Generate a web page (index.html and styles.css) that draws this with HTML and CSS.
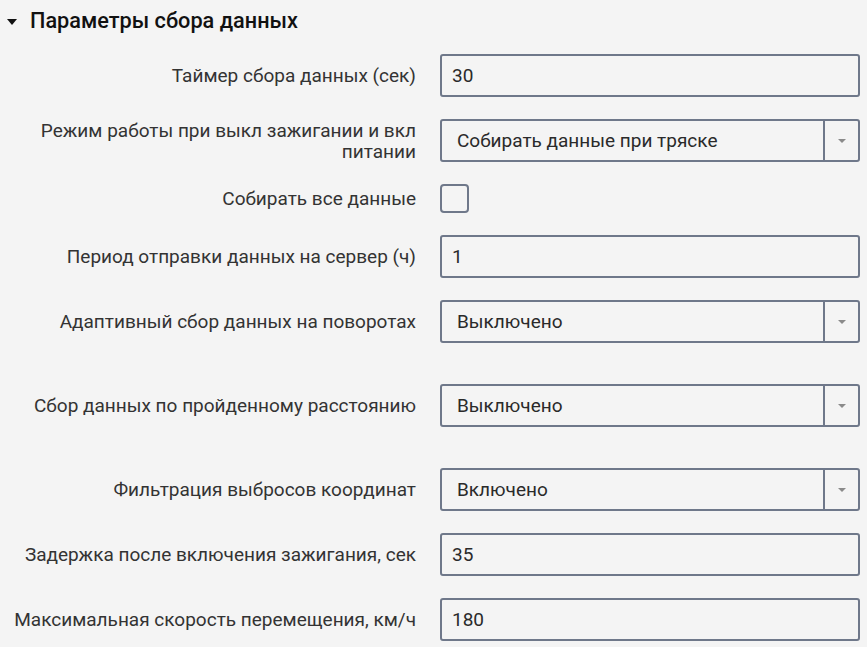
FILE: index.html
```html
<!DOCTYPE html>
<html lang="ru">
<head>
<meta charset="utf-8">
<title>Параметры сбора данных</title>
<link rel="stylesheet" href="styles.css">
</head>
<body>
<section class="panel">
  <h2 class="panel-title"><span class="caret"></span>Параметры сбора данных</h2>
  <div class="form">
    <div class="row">
      <label class="label">Таймер сбора данных (сек)</label>
      <div class="field input">30</div>
    </div>
    <div class="row">
      <label class="label">Режим работы при выкл зажигании и вкл питании</label>
      <div class="field select"><span class="select-value">Собирать данные при тряске</span><span class="select-btn"><span class="arrow"></span></span></div>
    </div>
    <div class="row row-check">
      <label class="label">Собирать все данные</label>
      <div class="field-check"><span class="checkbox"></span></div>
    </div>
    <div class="row">
      <label class="label">Период отправки данных на сервер (ч)</label>
      <div class="field input">1</div>
    </div>
    <div class="row row-spaced">
      <label class="label">Адаптивный сбор данных на поворотах</label>
      <div class="field select"><span class="select-value">Выключено</span><span class="select-btn"><span class="arrow"></span></span></div>
    </div>
    <div class="row row-spaced">
      <label class="label">Сбор данных по пройденному расстоянию</label>
      <div class="field select"><span class="select-value">Выключено</span><span class="select-btn"><span class="arrow"></span></span></div>
    </div>
    <div class="row">
      <label class="label">Фильтрация выбросов координат</label>
      <div class="field select"><span class="select-value">Включено</span><span class="select-btn"><span class="arrow"></span></span></div>
    </div>
    <div class="row">
      <label class="label">Задержка после включения зажигания, сек</label>
      <div class="field input">35</div>
    </div>
    <div class="row">
      <label class="label">Максимальная скорость перемещения, км/ч</label>
      <div class="field input">180</div>
    </div>
  </div>
</section>
</body>
</html>
```

FILE: styles.css
```css
html, body {
  margin: 0;
  padding: 0;
  background: #f4f4f4;
}
body {
  font-family: Roboto, "Noto Sans", sans-serif;
  color: #2a2a2a;
}
.panel {
  padding: 8px 7px 0 0;
}
.panel-title {
  display: flex;
  align-items: center;
  margin: 0;
  font-size: 21.7px;
  font-weight: 500;
  line-height: 26px;
  color: #111;
}
.caret {
  width: 0;
  height: 0;
  margin: 1px 13px 0 7px;
  border-left: 5.5px solid transparent;
  border-right: 5.5px solid transparent;
  border-top: 6px solid #111;
}
.form {
  display: flex;
  flex-direction: column;
  gap: 22px;
  margin-top: 20px;
}
.row {
  display: grid;
  grid-template-columns: 416px 420px;
  column-gap: 24px;
  align-items: center;
}
.row-spaced {
  margin-bottom: 19px;
}
.label {
  text-align: right;
  font-size: 19px;
  line-height: 21px;
  color: #333;
}
.field {
  box-sizing: border-box;
  height: 43px;
  border: 2px solid #6f788a;
  border-radius: 3px;
  font-size: 19px;
  color: #2a2a2a;
  display: flex;
  align-items: center;
}
.input {
  padding: 0 10px;
}
.select-value {
  flex: 1;
  padding-left: 15px;
}
.select-btn {
  width: 33px;
  align-self: stretch;
  border-left: 2px solid #6f788a;
  display: flex;
  align-items: center;
  justify-content: center;
}
.arrow {
  width: 0;
  height: 0;
  border-left: 4px solid transparent;
  border-right: 4px solid transparent;
  border-top: 4px solid #8a8a8a;
}
.field-check {
  display: flex;
  align-items: center;
}
.checkbox {
  box-sizing: border-box;
  width: 29px;
  height: 29px;
  border: 2px solid #6f788a;
  border-radius: 4px;
}
```
